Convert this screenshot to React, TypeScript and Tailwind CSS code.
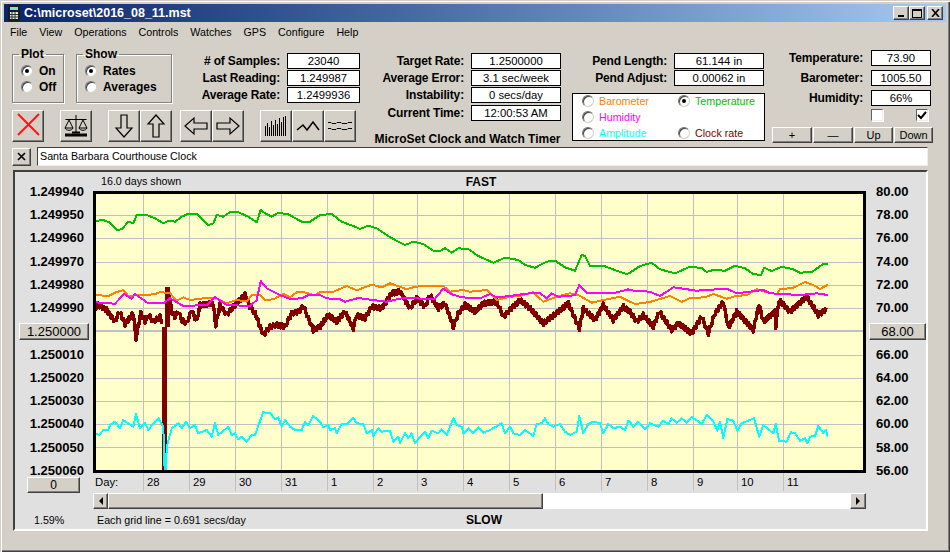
import type { ReactNode } from "react";

const raised =
  "bg-[#d4d0c8] border border-t-white border-l-white border-r-[#404040] border-b-[#404040] shadow-[inset_-1px_-1px_0_#808080]";

// traces are read off the reference in 3x crop coordinates, tr() maps them back to page pixels
function tr(ox: number, oy: number, pts: number[]): [number, number][] {
  const out: [number, number][] = [];
  for (let i = 0; i < pts.length; i += 2) out.push([ox + pts[i] / 3, oy + pts[i + 1] / 3]);
  return out;
}

const green = [
  ...tr(0, 170, [285,153,310,150,330,158,350,180,365,178,385,155,400,160,410,135,440,135,465,145,490,160,505,152,525,155,545,140,565,131,590,132,610,150,625,165,640,160,650,135,670,140,690,127,715,127,745,140,770,157,782,120,795,130,815,140,835,128,865,133,905,155,930,155,960,135]),
  ...tr(320, 180, [35,102,65,125,105,140,120,147,145,137,170,145,210,172,255,195,280,185,310,192,340,212,360,213,375,205,395,218,415,205,445,207,475,228,520,248,555,233,595,240,615,255,645,263,680,245,705,242,735,262,765,272,785,225,795,228,810,257,850,257,890,272,920,282]),
  ...tr(630, 180, [0,278,30,258,65,248,90,268,135,280,180,260,215,264,230,276,250,270,285,272,315,257,345,265,370,282,393,285,402,263,425,273,455,260,490,268,510,278,545,276,580,252,593,251]),
];

const orange = [
  ...tr(0, 170, [285,375,325,378,345,368,370,360,385,378,420,375,465,373,480,366,510,370,530,392,550,382,570,390,610,385,650,385,680,400,710,390,740,395,755,375,780,375,795,390,820,388,850,372,870,382,890,367,910,366,945,376]),
  ...tr(320, 180, [0,336,40,335,80,318,110,331,155,314,185,322,210,310,260,328,285,320,320,318,370,318,390,335,430,330,450,335,500,330,530,360,570,350,600,348,640,337,670,365,710,350,750,340,775,345,815,368,850,360,900,350]),
  ...tr(630, 180, [0,365,15,372,60,366,120,348,155,366,180,354,225,352,250,342,290,356,320,347,350,346,380,327,405,335,440,342,450,328,490,323,525,306,550,315,570,327,593,314]),
];

const magenta = [
  ...tr(0, 170, [285,397,345,401,372,372,395,386,405,372,445,400,490,400,510,385,550,408,620,405,645,382,680,405,750,408,770,390,782,333,800,355,840,375,870,387,905,385,925,375,960,375]),
  ...tr(320, 180, [20,355,60,358,75,365,115,354,165,361,200,365,245,355,345,356,370,326,395,343,425,352,480,355,510,342,530,352,570,348,640,338,660,340,680,355,695,340,715,350,765,346,778,315,800,338,880,340,925,328]),
  ...tr(630, 180, [0,331,60,335,90,348,130,322,200,332,260,328,290,326,320,340,400,330,420,340,510,345,560,340,593,345]),
];

const brownBase = [
  ...tr(0, 170, [285,415,295,405,320,420,345,455,358,425,375,462,400,430,408,505,422,430,435,455,445,435,460,455,480,440,490,470]),
  ...tr(0, 170, [512,420,525,440,535,425,545,450,560,460,575,420,590,455,600,405,640,400,647,465,660,405,680,435,700,410,735,375,750,410,765,430,790,495,810,470,830,465,855,470,875,430,895,425,910,408,925,445,940,480]),
  ...tr(320, 180, [0,440,25,405,50,425,75,395,100,445,110,405,135,415,155,380,185,385,215,340,240,335,270,385,290,355,315,380,330,345,355,385,375,370,400,440,415,400,435,375,465,395,490,370,530,365,550,410,570,390,600,360,630,385,670,430,715,395,745,370,778,445,790,385,825,420,850,375,880,420,910,380]),
  ...tr(630, 180, [0,395,20,425,40,405,70,440,88,395,125,450,145,430,185,460,215,410,235,460,255,400,280,365,295,445,320,395,370,450,387,372,400,425,435,395,437,440,447,360,480,395,530,350,565,405,593,385]),
];

// the clock-rate trace is jagged, so add a small saw on top of the traced shape
function jag(pts: [number, number][]): [number, number][] {
  const out: [number, number][] = [];
  for (let i = 0; i < pts.length - 1; i++) {
    const [x0, y0] = pts[i];
    const [x1, y1] = pts[i + 1];
    const n = Math.max(1, Math.round((x1 - x0) / 1.5));
    for (let j = 0; j < n; j++) {
      const t = j / n;
      out.push([x0 + (x1 - x0) * t, y0 + (y1 - y0) * t + (out.length % 2 ? 2 : -2)]);
    }
  }
  return out;
}

const cyan = [
  ...tr(0, 400, [285,100,297,105,310,90,325,90,330,75,345,65,360,85,370,60,400,80,408,42,420,85,435,68,445,90,460,70,475,55,490,80,494,215,498,215,500,140,515,85,535,70,545,85,558,65,570,85,585,75,595,100,620,90,635,110,645,70,655,105,685,80,695,105,705,100,715,118,725,110,740,125,755,105,765,105,790,35,800,40,810,38,825,58,835,52,845,80,855,60,870,80,885,90,905,90,915,65,925,75,940,48]),
  ...tr(320, 400, [0,65,10,82,25,75,30,90,45,85,50,100,65,72,80,72,100,53,110,70,130,72,140,100,155,90,160,108,175,85,185,95,210,92,220,125,235,110,240,128,255,100,265,115,275,100,285,130,300,110,315,95,325,115,335,92,355,100,365,88,380,105,400,55,410,75,425,80,430,100,445,85,460,100,475,82,490,98,510,90,525,82,545,70,555,100,570,80,580,100,600,105,615,90,640,108,650,72,665,70,675,55,685,72,700,80,720,72,735,95,750,105,770,95,778,48,790,100,805,72,820,65,840,70,850,100,865,72,880,85,900,80,915,90,925,62]),
  ...tr(630, 400, [0,65,10,82,25,65,45,88,60,70,85,80,100,62,115,72,125,55,140,68,155,55,170,68,185,50,215,72,230,45,250,65,262,92,270,65,280,115,292,57,310,62,322,92,335,70,372,55,388,110,400,75,430,100,437,72,447,122,470,125,482,97,495,100,510,122,525,115,532,130,540,110,555,108,565,78,580,100,588,90,593,110]),
];

const line = (p: [number, number][]) => p.map(([x, y]) => `${x.toFixed(1)},${y.toFixed(1)}`).join(" ");

const vGrid = [143, 189, 235, 281, 327, 373, 417, 463, 509, 555, 601, 647, 693, 737, 783];
const hGrid = [215, 238, 262, 285, 308, 355, 378, 401, 424, 447];
const days = ["28", "29", "30", "31", "1", "2", "3", "4", "5", "6", "7", "8", "9", "10", "11"];
const dayWidths = ["w-[46px]", "w-[46px]", "w-[46px]", "w-[46px]", "w-[46px]", "w-[44px]", "w-[46px]", "w-[46px]", "w-[46px]", "w-[46px]", "w-[46px]", "w-[46px]", "w-[44px]", "w-[46px]", "w-[83px]"];
const rates = ["1.249940", "1.249950", "1.249960", "1.249970", "1.249980", "1.249990", "1.250000", "1.250010", "1.250020", "1.250030", "1.250040", "1.250050", "1.250060"];
const temps = ["80.00", "78.00", "76.00", "74.00", "72.00", "70.00", "68.00", "66.00", "64.00", "62.00", "60.00", "58.00", "56.00"];

function Radio({ on }: { on?: boolean }) {
  return (
    <span className="w-3 h-3 rounded-full bg-white border border-t-[#707070] border-l-[#707070] border-r-[#d4d0c8] border-b-[#d4d0c8] shadow-[inset_1px_1px_0_#404040] flex items-center justify-center shrink-0">
      {on && <span className="w-1 h-1 rounded-full bg-black" />}
    </span>
  );
}

function Field({ children, className }: { children: ReactNode; className: string }) {
  return (
    <div className={`border border-black bg-white h-4 flex items-center justify-center text-black text-[11.3px] ${className}`}>
      {children}
    </div>
  );
}

function Stat({ label, value, labelW, inputW, gap, className }: { label: string; value: string; labelW: string; inputW: string; gap: string; className: string }) {
  return (
    <div className={`flex items-center ${gap} ${className}`}>
      <div className={`${labelW} text-right font-bold text-[12px] tracking-[-0.15px] whitespace-nowrap`}>{label}</div>
      <Field className={inputW}>{value}</Field>
    </div>
  );
}

function ToolBtn({ children }: { children: ReactNode }) {
  return <button className={`${raised} w-8 h-8 flex items-center justify-center`}>{children}</button>;
}

function Group({ title, className, children }: { title: string; className: string; children: ReactNode }) {
  return (
    <fieldset className={`border border-[#808080] shadow-[1px_1px_0_#fff,inset_1px_1px_0_#fff] ${className}`}>
      <legend className="ml-1.5 px-0.5 font-bold text-[12px] leading-[14px]">{title}</legend>
      {children}
    </fieldset>
  );
}

function LegendItem({ label, color, on }: { label: string; color: string; on?: boolean }) {
  return (
    <div className="flex items-center gap-[5px] h-4">
      <Radio on={on} />
      <span className={color}>{label}</span>
    </div>
  );
}

export default function App() {
  return (
    <div className="w-[950px] h-[552px] overflow-hidden bg-[#d4d0c8] px-1 pt-1 font-['Liberation_Sans',sans-serif] text-[10.7px] text-black shadow-[inset_1px_1px_0_#d4d0c8,inset_2px_2px_0_#fff,inset_-1px_-1px_0_#404040,inset_-2px_-2px_0_#808080]">
      {/* title bar */}
      <div className="h-[18px] flex items-center bg-gradient-to-r from-[#0a246a] to-[#a6caf0] pl-1 pr-[3px]">
        <svg width="12" height="16" viewBox="0 0 12 16" className="shrink-0">
          <rect width="12" height="16" fill="#1c1c1c" />
          <rect x="2" y="2" width="8" height="3" fill="#7fe0d0" />
          <rect x="2" y="7" width="8" height="7" fill="#e8e8e8" />
          <path d="M4 7v7M7 7v7M2 9.5h8M2 12h8" stroke="#333" strokeWidth="1" />
        </svg>
        <span className="ml-1 text-white font-bold text-[12.5px] leading-none">C:\microset\2016_08_11.mst</span>
        <div className="ml-auto flex">
          <button className={`${raised} w-4 h-[14px] flex items-end justify-center pb-[2px]`}>
            <span className="w-[6px] h-[2px] bg-black" />
          </button>
          <button className={`${raised} w-4 h-[14px] flex items-center justify-center`}>
            <span className="w-[10px] h-[9px] border border-t-2 border-black" />
          </button>
          <button className={`${raised} w-4 h-[14px] ml-[2px] flex items-center justify-center`}>
            <svg width="9" height="8" viewBox="0 0 9 8"><path d="M1 0l7 8M8 0l-7 8" stroke="#000" strokeWidth="1.6" /></svg>
          </button>
        </div>
      </div>

      {/* menu */}
      <div className="h-[18px] mt-px flex items-center gap-[12px] pl-1.5">
        {["File", "View", "Operations", "Controls", "Watches", "GPS", "Configure", "Help"].map((m) => (
          <span key={m}>{m}</span>
        ))}
      </div>

      {/* controls */}
      <div className="flex pl-2 mt-[6px] h-[100px]">
        <div className="w-[348px] shrink-0">
          <div className="flex">
            <Group title="Plot" className="w-[52px] h-[56px]">
              <div className="pl-2 pt-[2px] font-bold text-[12px]">
                <div className="flex items-center gap-1.5 h-4"><Radio on /><span>On</span></div>
                <div className="flex items-center gap-1.5 h-4"><Radio /><span>Off</span></div>
              </div>
            </Group>
            <Group title="Show" className="w-[96px] h-[56px] ml-3">
              <div className="pl-2 pt-[2px] font-bold text-[12px]">
                <div className="flex items-center gap-1.5 h-4"><Radio on /><span>Rates</span></div>
                <div className="flex items-center gap-1.5 h-4"><Radio /><span>Averages</span></div>
              </div>
            </Group>
            <div className="pt-1.5">
              <Stat label="# of Samples:" value="23040" labelW="w-[108px]" inputW="w-[73px]" gap="gap-[7px]" className="h-4 mb-px" />
              <Stat label="Last Reading:" value="1.249987" labelW="w-[108px]" inputW="w-[73px]" gap="gap-[7px]" className="h-4 mb-px" />
              <Stat label="Average Rate:" value="1.2499936" labelW="w-[108px]" inputW="w-[73px]" gap="gap-[7px]" className="h-4" />
            </div>
          </div>
          <div className="flex mt-[7px]">
            <ToolBtn>
              <svg width="26" height="26" viewBox="0 0 26 26"><path d="M3 1l21 21M24 1L3 22" stroke="#ff1414" strokeWidth="2" /></svg>
            </ToolBtn>
            <div className="ml-4">
              <ToolBtn>
                <svg width="26" height="26" viewBox="0 0 26 26" fill="none" stroke="#000">
                  <path d="M13 2v17M2.500 6.500h21M6 7L2 15h8zM20 7l-4 8h8z" />
                  <path d="M2 15c1 3 7 3 8 0M16 15c1 3 7 3 8 0" />
                  <path d="M2 22h22" strokeWidth="3" />
                  <path d="M9 19.500h8" strokeWidth="2" />
                </svg>
              </ToolBtn>
            </div>
            <div className="ml-4 flex">
              <ToolBtn>
                <svg width="20" height="26" viewBox="0 0 20 26" fill="none" stroke="#000" strokeWidth="1.2"><path d="M7 2h6v13h5l-8 9-8-9h5z" /></svg>
              </ToolBtn>
              <ToolBtn>
                <svg width="20" height="26" viewBox="0 0 20 26" fill="none" stroke="#000" strokeWidth="1.2"><path d="M7 24h6V11h5l-8-9-8 9h5z" /></svg>
              </ToolBtn>
            </div>
            <div className="ml-2 flex">
              <ToolBtn>
                <svg width="26" height="20" viewBox="0 0 26 20" fill="none" stroke="#000" strokeWidth="1.2"><path d="M24 7v6H11v5l-9-8 9-8v5z" /></svg>
              </ToolBtn>
              <ToolBtn>
                <svg width="26" height="20" viewBox="0 0 26 20" fill="none" stroke="#000" strokeWidth="1.2"><path d="M2 7v6h13v5l9-8-9-8v5z" /></svg>
              </ToolBtn>
            </div>
            <div className="ml-4 flex">
              <ToolBtn>
                <svg width="24" height="22" viewBox="0 0 24 22" stroke="#000" strokeWidth="1">
                  <path d="M1.500 21V11M3.500 21V8M5.500 21V12M7.500 21V6M9.500 21V10M11.500 21V5M13.500 21V9M15.500 21V3M17.500 21V7M19.500 21V2M21.500 21V1" />
                </svg>
              </ToolBtn>
              <ToolBtn>
                <svg width="24" height="12" viewBox="0 0 24 12" fill="none" stroke="#000" strokeWidth="1.5"><path d="M1 10l6-5 4 5 6-8 6 8" /></svg>
              </ToolBtn>
              <ToolBtn>
                <svg width="26" height="12" viewBox="0 0 26 12" fill="none" stroke="#000" strokeWidth="1"><path d="M1 2.500h3l1 1h4l1-1h4l1 1h5l1-1h4M1 8.500h3l1 1h4l1-1h4l1 1h5l1-1h4" /></svg>
              </ToolBtn>
            </div>
          </div>
        </div>

        <div className="w-[187px] ml-[14px] shrink-0 pt-1.5">
          <Stat label="Target Rate:" value="1.2500000" labelW="w-[90px]" inputW="w-[90px]" gap="gap-[7px]" className="h-4 mb-px" />
          <Stat label="Average Error:" value="3.1 sec/week" labelW="w-[90px]" inputW="w-[90px]" gap="gap-[7px]" className="h-4 mb-px" />
          <Stat label="Instability:" value="0 secs/day" labelW="w-[90px]" inputW="w-[90px]" gap="gap-[7px]" className="h-4 mb-[2px]" />
          <Stat label="Current Time:" value="12:00:53 AM" labelW="w-[90px]" inputW="w-[90px]" gap="gap-[7px]" className="h-4" />
          <div className="mt-[9px] font-bold text-[12px] text-center whitespace-nowrap">MicroSet Clock and Watch Timer</div>
        </div>

        <div className="w-[193px] ml-[11px] shrink-0 pt-1.5">
          <Stat label="Pend Length:" value="61.144 in" labelW="w-[95px]" inputW="w-[90px]" gap="gap-[7px]" className="h-4 mb-px" />
          <Stat label="Pend Adjust:" value="0.00062 in" labelW="w-[95px]" inputW="w-[90px]" gap="gap-[7px]" className="h-4" />
          <div className="mt-[7px] h-[48px] border border-black bg-white grid grid-cols-[96px_1fr] content-center pl-[9px]">
            <LegendItem label="Barometer" color="text-[#ff8000]" />
            <LegendItem label="Temperature" color="text-[#00c000]" on />
            <LegendItem label="Humidity" color="text-[#ff00ff]" />
            <div />
            <LegendItem label="Amplitude" color="text-[#00ffff]" />
            <LegendItem label="Clock rate" color="text-[#800000]" />
          </div>
        </div>

        <div className="w-[162px] ml-[7px] shrink-0 pt-[3px]">
          <Stat label="Temperature:" value="73.90" labelW="w-[91px]" inputW="w-[60px]" gap="gap-2" className="h-4 mb-1" />
          <Stat label="Barometer:" value="1005.50" labelW="w-[91px]" inputW="w-[60px]" gap="gap-2" className="h-4 mb-1" />
          <Stat label="Humidity:" value="66%" labelW="w-[91px]" inputW="w-[60px]" gap="gap-2" className="h-4" />
          <div className="flex mt-[3px] ml-[99px] gap-[33px]">
            <span className="w-3 h-3 bg-white border border-t-[#606060] border-l-[#606060] border-r-[#eeeeee] border-b-[#eeeeee] shadow-[1px_1px_0_#ffffff]" />
            <span className="w-3 h-3 bg-white border border-t-[#606060] border-l-[#606060] border-r-[#eeeeee] border-b-[#eeeeee] shadow-[1px_1px_0_#ffffff] flex items-center justify-center">
              <svg width="10" height="10" viewBox="0 0 10 10" fill="none" stroke="#000" strokeWidth="2"><path d="M1 5l3 3 5-6" /></svg>
            </span>
          </div>
          <div className="flex gap-px mt-1.5 text-[11px]">
            <button className={`${raised} w-10 h-4 flex items-center justify-center leading-none`}>+</button>
            <button className={`${raised} w-10 h-4 flex items-center justify-center leading-none`}>—</button>
            <button className={`${raised} w-[39px] h-4 flex items-center justify-center leading-none`}>Up</button>
            <button className={`${raised} w-[39px] h-4 flex items-center justify-center leading-none`}>Down</button>
          </div>
        </div>
      </div>

      {/* clock name */}
      <div className="flex items-center pl-2 h-[19px]">
        <button className={`${raised} w-[19px] h-[18px] flex items-center justify-center`}>
          <svg width="9" height="9" viewBox="0 0 9 9"><path d="M1 1l7 7M8 1l-7 7" stroke="#000" strokeWidth="1.6" /></svg>
        </button>
        <div className="ml-[6px] w-[891px] h-[19px] bg-white flex items-center pl-0.5 border border-t-[#404040] border-l-[#404040] border-r-[#eeeeee] border-b-[#eeeeee]">
          Santa Barbara Courthouse Clock
        </div>
      </div>

      {/* chart panel */}
      <div className="ml-[9px] mt-[4px] w-[915px] h-[361px] bg-[#e0e0e0] border-2 border-t-[#404040] border-l-[#404040] border-r-white border-b-white">
        <div className="h-[19px] flex items-center">
          <div className="w-[86px] shrink-0" />
          <div className="w-[330px] shrink-0">16.0 days shown</div>
          <div className="w-[100px] shrink-0 text-center font-bold text-[12px]">FAST</div>
        </div>

        <div className="flex h-[282px]">
          <div className="w-[78px] shrink-0 -mt-[11px] font-bold text-[13px]">
            {rates.map((r) =>
              r === "1.250000" ? (
                <div key={r} className="h-[23.25px] flex items-center pl-1">
                  <button className={`${raised} w-[70px] h-[17px] flex items-center justify-center leading-none font-normal`}>{r}</button>
                </div>
              ) : (
                <div key={r} className="h-[23.25px] flex items-center justify-end pr-[9px]">{r}</div>
              ),
            )}
          </div>
          <div className="w-[773px] h-[282px] shrink-0 border-[3px] border-black bg-[#ffffcc]">
            <svg width="767" height="276" viewBox="96 194 767 276" fill="none" className="block">
              {hGrid.map((y) => (
                <line key={y} x1="96" x2="863" y1={y + 0.5} y2={y + 0.5} stroke="#c0c0c0" />
              ))}
              <line x1="96" x2="863" y1="331" y2="331" stroke="#c0c0c0" strokeWidth="2" />
              {vGrid.map((x) => (
                <line key={x} y1="194" y2="470" x1={x + 0.5} x2={x + 0.5} stroke="#c0c0c0" />
              ))}
              <g shapeRendering="crispEdges" strokeLinejoin="round">
                <polyline points={line(jag(brownBase.slice(0, 14)))} stroke="#800000" strokeWidth="3.5" />
                <polyline points={line(jag(brownBase.slice(14)))} stroke="#800000" strokeWidth="3.5" />
                <path d="M164.500 470V327M167 327V287M167 287L171 310" stroke="#800000" strokeWidth="5" />
                <polyline points={line(orange)} stroke="#ff8000" strokeWidth="2" />
                <polyline points={line(magenta)} stroke="#ff00ff" strokeWidth="2" />
                <polyline points={line(green)} stroke="#00c000" strokeWidth="2" />
                <polyline points={line(cyan)} stroke="#00ffff" strokeWidth="2" />
              </g>
            </svg>
          </div>
          <div className="w-[60px] shrink-0 -mt-[11px] font-bold text-[13px]">
            {temps.map((t) =>
              t === "68.00" ? (
                <div key={t} className="h-[23.25px] flex items-center pl-[3px]">
                  <button className={`${raised} w-[57px] h-[17px] flex items-center justify-center leading-none font-normal`}>{t}</button>
                </div>
              ) : (
                <div key={t} className="h-[23.25px] flex items-center pl-[10px]">{t}</div>
              ),
            )}
          </div>
        </div>

        <div className="flex h-5">
          <div className="w-[78px] shrink-0 pl-3 pt-1">
            <button className={`${raised} w-[53px] h-4 flex items-center justify-center leading-none text-[12px]`}>0</button>
          </div>
          <div className="flex h-[18px] items-center text-[11.3px]">
            <div className="w-[50px] pl-0.5">Day:</div>
            {days.map((d, i) => (
              <div key={d} className={`${dayWidths[i]} h-[18px] border-l border-[#c0c0c0] pl-[3px] flex items-center`}>{d}</div>
            ))}
          </div>
        </div>

        <div className="flex h-4 ml-[78px] w-[773px]">
          <button className={`${raised} w-[15px] flex items-center justify-center`}>
            <span className="w-0 h-0 border-y-[4px] border-y-transparent border-r-[4px] border-r-black" />
          </button>
          <div className={`${raised} w-[435px]`} />
          <div className="flex-1 bg-white" />
          <button className={`${raised} w-4 flex items-center justify-center`}>
            <span className="w-0 h-0 border-y-[4px] border-y-transparent border-l-[4px] border-l-black" />
          </button>
        </div>

        <div className="flex items-center h-[22px]">
          <div className="w-[82px] shrink-0 pl-[19px]">1.59%</div>
          <div className="w-[322px] shrink-0">Each grid line = 0.691 secs/day</div>
          <div className="w-[130px] shrink-0 text-center font-bold text-[12px]">SLOW</div>
        </div>
      </div>
    </div>
  );
}
